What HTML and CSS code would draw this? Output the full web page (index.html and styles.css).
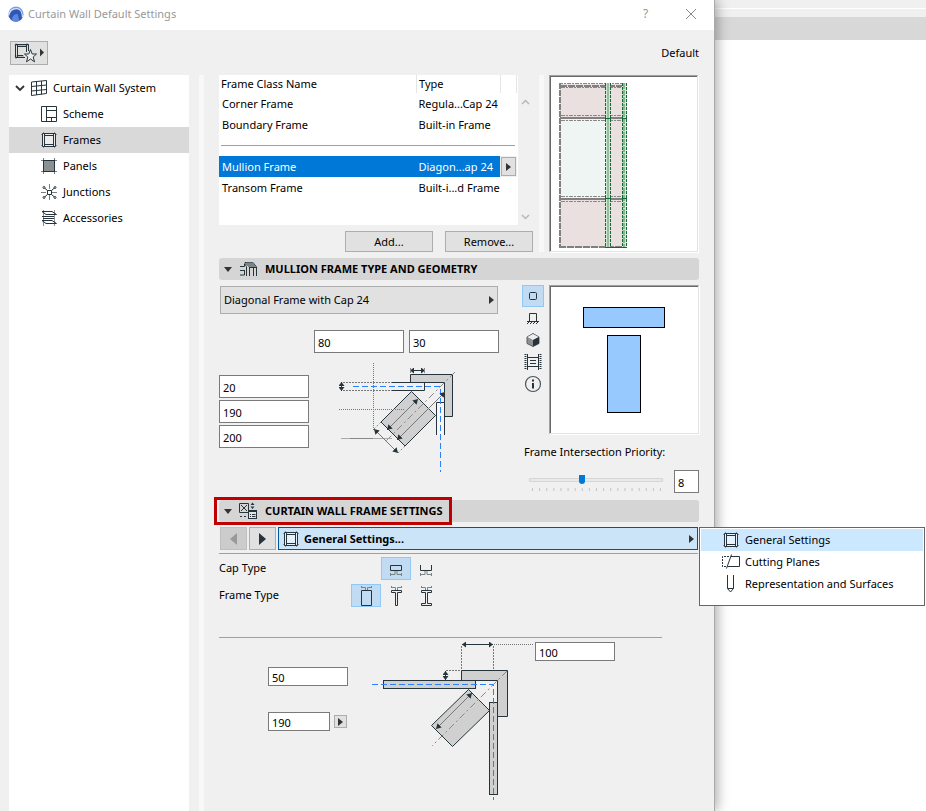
FILE: index.html
```html
<!DOCTYPE html>
<html lang="en">
<head>
<meta charset="utf-8">
<title>Curtain Wall Default Settings</title>
<link rel="stylesheet" href="styles.css">
</head>
<body>
<svg class="defs" aria-hidden="true">
  <defs>
    <symbol id="frame" viewBox="0 0 16 16">
      <path d="M2.500 0V2M13.500 0V2M2.500 14V16M13.500 14V16M0 2.500H2M0 13.500H2M14 2.500H16M14 13.500H16" stroke="#8a9093" fill="none"/>
      <path d="M1.500 1.500H14.500V14.500H1.500Z" stroke="#27343b" fill="#fff" fill-opacity=".5"/>
      <path d="M3.500 3.500H12.500V12.500H3.500ZM3.500 1.500V14.500M12.500 1.500V14.500" stroke="#27343b" fill="none"/>
    </symbol>
    <symbol id="tri" viewBox="0 0 5 8"><path d="M0 0L5 4L0 8Z" fill="#333"/></symbol>
    <marker id="arrow" viewBox="0 0 4 6" refX="4" refY="3" markerWidth="4" markerHeight="6" markerUnits="userSpaceOnUse" orient="auto-start-reverse"><path d="M0 0L4 3L0 6Z" fill="#27343b"/></marker>
    <marker id="arrow-big" viewBox="0 0 5 6" refX="5" refY="3" markerWidth="5" markerHeight="6" markerUnits="userSpaceOnUse" orient="auto-start-reverse"><path d="M0 0L5 3L0 6Z" fill="#27343b"/></marker>
  </defs>
</svg>
<div class="desktop">
  <main class="dialog">
    <header class="titlebar">
      <svg width="16" height="16" viewBox="0 0 16 16"><circle cx="8" cy="8" r="7.600" fill="#7d9fe4"/><path d="M.5 10C1.500 5 5 2 9 2.500C13 3 15 7 15 11A8 8 0 0 1 3 14Z" fill="#2f58b4"/><path d="M.6 9.500C2 4.500 5.500 2.300 9 2.600C12.500 3 14.500 7 14.500 11.500" fill="none" stroke="#dce6fa" stroke-width="1.200"/><path d="M3.500 14C4.500 10 6.500 7.500 9.500 8L11.500 15A8 8 0 0 1 3.500 14Z" fill="#5f86dc"/></svg>
      <h1>Curtain Wall Default Settings</h1>
      <button class="caption" aria-label="Help">?</button>
      <button class="caption" aria-label="Close"><svg width="12" height="12" viewBox="0 0 12 12"><path d="M1 1L11 11M11 1L1 11" stroke="#888" fill="none"/></svg></button>
    </header>
    <div class="toolbar">
      <button class="favorites" aria-label="Favorites">
        <svg width="34" height="20" viewBox="12 43 34 20">
          <path d="M14.500 45H29M14.500 56H24M16 43V45M27 43V45M16 57V59" stroke="#8a9093" fill="none"/>
          <path d="M15.500 44.500H28.500V51M15.500 44.500V57.500H25M17.500 44.500V57.500M26.500 44.500V52M17.500 46.500H26.500M17.500 55.500H23" stroke="#27343b" fill="none"/>
          <path d="M30.500 49.500L32.200 54H36.500L33.200 57L34.500 61.800L30.500 59L26.500 61.800L27.800 57L24.500 54H28.800Z" fill="#eee" stroke="#27343b"/>
          <path d="M40 48.500L44 52.500L40 56.500Z" fill="#333"/>
        </svg>
      </button>
      <span>Default</span>
    </div>
    <div class="body">
      <nav class="tree">
        <a class="root" href="#system"><svg width="10" height="8" viewBox="0 0 10 8"><path d="M1 2L5 6L9 2" stroke="#333" stroke-width="1.800" fill="none"/></svg><svg width="16" height="16" viewBox="0 0 16 16"><path d="M.5 2L15.500 .5V13.500L.5 15.500ZM5.500 1.500V15M10.500 1V14.500M.5 6.500L15.500 5M.5 11L15.500 9.500" stroke="#27343b" fill="none"/></svg>Curtain Wall System</a>
        <a href="#scheme"><svg width="16" height="16" viewBox="0 0 16 16"><path d="M.5 .5H15.500V15.500H.5ZM5.500 .5V15.500M5.500 4.500H15.500M5.500 11.500H15.500M10.500 11.500V15.500" stroke="#27343b" fill="none"/></svg>Scheme</a>
        <a class="current" href="#frames"><svg width="16" height="16"><use href="#frame"/></svg>Frames</a>
        <a href="#panels"><svg width="16" height="16" viewBox="0 0 16 16"><path d="M2.500 0V16M13.500 0V16M0 2.500H16M0 13.500H16" stroke="#788084" fill="none"/><rect x="2.500" y="2.500" width="11" height="11" fill="#8b9193" stroke="#27343b"/></svg>Panels</a>
        <a href="#junctions"><svg width="16" height="16" viewBox="0 0 16 16"><path d="M8.500 0V5M8.500 11V16M0 8.500H5M11 8.500H16" stroke="#788084" fill="none"/><path d="M3 3.500L6.500 6.500M14 3.500L10.500 6.500M3 13.500L6.500 10.500M14 13.500L10.500 10.500M6.500 6.500H10.500V10.500H6.500Z" stroke="#27343b" fill="none"/><g fill="#fff" stroke="#27343b"><circle cx="3" cy="3.500" r="1"/><circle cx="14" cy="3.500" r="1"/><circle cx="3" cy="13.500" r="1"/><circle cx="14" cy="13.500" r="1"/></g></svg>Junctions</a>
        <a href="#accessories"><svg width="16" height="16" viewBox="0 0 16 16"><path d="M2.500 0V16M13.500 0V16" stroke="#8a9093" fill="none"/><path d="M1 1.500H11L15.500 4.500H5ZM1 10.500H11L15.500 13.500H5ZM1 6.500H13M2 8.500H13" stroke="#27343b" fill="none"/></svg>Accessories</a>
      </nav>
      <div class="splitter"></div>
      <div class="content">
        <section class="classes">
          <div class="class-list">
            <div class="list-row">
              <div class="listbox">
                <table>
                  <thead><tr><th class="name">Frame Class Name</th><th class="type">Type</th><th class="pick"></th></tr></thead>
                  <tbody>
                    <tr><td>Corner Frame</td><td>Regula...Cap 24</td><td></td></tr>
                    <tr><td>Boundary Frame</td><td>Built-in Frame</td><td></td></tr>
                    <tr class="rule"><td colspan="3"><hr></td></tr>
                    <tr class="selected"><td>Mullion Frame</td><td>Diagon...ap 24</td><td><button class="pick-btn" aria-label="Choose type"><svg width="5" height="8"><use href="#tri"/></svg></button></td></tr>
                    <tr><td>Transom Frame</td><td>Built-i...d Frame</td><td></td></tr>
                  </tbody>
                </table>
              </div>
              <div class="scroll">
                <svg width="9" height="6" viewBox="0 0 9 6"><path d="M1 5L4.500 1.500L8 5" stroke="#b8b8b8" stroke-width="1.500" fill="none"/></svg>
                <svg width="9" height="6" viewBox="0 0 9 6"><path d="M1 1L4.500 4.500L8 1" stroke="#b8b8b8" stroke-width="1.500" fill="none"/></svg>
              </div>
            </div>
            <div class="actions"><button class="btn">Add...</button><button class="btn">Remove...</button></div>
          </div>
          <div class="splitter"></div>
          <div class="sunken wall">
            <svg width="68" height="166" viewBox="559 83 68 166">
              <rect x="560" y="84" width="66" height="164" fill="#ebe0e0"/>
              <rect x="561" y="118" width="45" height="80" fill="#eff5f2"/>
              <path d="M560 83V248" stroke="#808080" stroke-width="2" stroke-dasharray="6 1"/>
              <path d="M559 83.500H626M561 115.500H622M561 120.500H622M561 196.500H622M561 201.500H622M561 87.500H622" stroke="#888" stroke-dasharray="4 1 2 1"/>
              <path d="M560 86H622M559 247H626" stroke="#808080" stroke-width="2" stroke-dasharray="7 1"/>
              <path d="M560 118H624M560 199H624" stroke="#808080" stroke-width="2"/>
              <path d="M608 83V248" stroke="#c9ecd0" stroke-width="4"/><path d="M608 83V248" stroke="#9cbaa1" stroke-width="2"/>
              <path d="M624.500 83V248" stroke="#c9ecd0" stroke-width="4"/><path d="M624 83V248" stroke="#8bb493" stroke-width="2" stroke-dasharray="6 1"/>
              <path d="M605.500 83V248M610.500 83V248M622.500 83V248M626.500 83V248" stroke="#116c34" stroke-dasharray="3 1"/>
              <path d="M605 118.500H611M622 118.500H627M605 198.500H611M622 198.500H627M605 247.500H627" stroke="#116c34"/>
            </svg>
          </div>
        </section>

        <h2 class="bar">
          <svg width="8" height="5" viewBox="0 0 8 5"><path d="M0 0H8L4 5Z" fill="#333"/></svg>
          <svg width="18" height="18" viewBox="239 260 18 18"><path d="M240 266.500H244.500V264M240 270.500H244.500M240 275H244.500V270M246.500 276V266.500L244.500 263.500M249.500 276V267L245 262.500H253L256.500 267V276M249.500 267.500H256M253.500 268V276" stroke="#27343b" fill="none"/><path d="M246 262.500L249.500 267H256L253 262.500Z" fill="#7b8386"/></svg>
          Mullion Frame Type and Geometry
        </h2>
        <section class="geometry">
          <div class="dims">
            <button class="combo">Diagonal Frame with Cap 24<svg width="5" height="8"><use href="#tri"/></svg></button>
            <div class="dims-top"><input type="text" aria-label="Cap width" value="80"><input type="text" aria-label="Cap offset" value="30"></div>
            <div class="dims-side">
              <div class="stack"><input type="text" aria-label="Glazing depth" value="20"><input type="text" aria-label="Frame length" value="190"><input type="text" aria-label="Frame depth" value="200"></div>
              <svg width="120" height="112" viewBox="338 362 120 112" fill="none">
                <path d="M410.500 374.500H452.500V416.500H444.500V382.500H410.500Z" fill="#d0d0d0" stroke="#27343b"/>
                <path d="M392 382.500H424.500V390.500H392" stroke="#27343b"/>
                <path d="M343 382.500H392M343 390.500H392" stroke="#777" stroke-dasharray="2 1"/>
                <path d="M411.500 391.500L435.500 415.500L405 446L381 422Z" fill="#d0d0d0" stroke="#27343b"/>
                <path d="M436.500 435V402.500H444.500V435" fill="#f5f5f5" stroke="#27343b"/>
                <path d="M353 386.500H440.500V472" stroke="#2b80ff" stroke-dasharray="6 3"/>
                <path d="M455 372L385 442" stroke="#888" stroke-dasharray="7 3 2 3"/>
                <path d="M373.500 363V430M339 409.500H405" stroke="#777" stroke-dasharray="1 1"/>
                <path d="M341 438.500H392" stroke="#aaa"/><path d="M350 438.500H373" stroke="#888"/>
                <g stroke="#777">
                  <path d="M387 430L418 399" marker-start="url(#arrow-big)" marker-end="url(#arrow-big)"/>
                  <path d="M397 440L445 392" marker-start="url(#arrow-big)" marker-end="url(#arrow-big)"/>
                  <path d="M374 429L398 453" marker-start="url(#arrow-big)" marker-end="url(#arrow-big)"/>
                </g>
                <path d="M381 422L374 429M405 446L398 453" stroke="#888" stroke-dasharray="2 2"/>
                <path d="M410 370.500H425" stroke="#27343b" marker-start="url(#arrow)" marker-end="url(#arrow)"/>
                <path d="M341.500 382V391" stroke="#27343b" marker-start="url(#arrow)" marker-end="url(#arrow)"/>
                <path d="M410.500 368V373M424.500 368V373" stroke="#888"/>
              </svg>
            </div>
          </div>
          <div class="view">
            <div class="view-main">
              <div class="view-modes">
                <button class="on" aria-label="Section view"><svg width="18" height="18" viewBox="0 0 18 18"><rect x="5.500" y="5.500" width="7" height="7" rx="1" fill="none" stroke="#27343b"/></svg></button>
                <button aria-label="Elevation view"><svg width="18" height="18" viewBox="0 0 18 18"><path d="M5.500 12V4.500H12.500V12M3 12.500H15" fill="none" stroke="#27343b"/><path d="M3 15L5 13M6 15L8 13M9 15L11 13M12 15L14 13" stroke="#27343b"/></svg></button>
                <button aria-label="3D view"><svg width="18" height="18" viewBox="0 0 18 18"><path d="M9 2.500L15 6V12.500L9 15.500L3 12.500V6Z" fill="#8b9193" stroke="#566066"/><path d="M3.500 6L9 3L14.500 6L9 9Z" fill="#eee"/><path d="M9 9L15 6V12.500L9 15.500Z" fill="#27343b"/></svg></button>
                <button aria-label="Preview picture"><svg width="18" height="18" viewBox="0 0 18 18"><path d="M1.500 1V17M16.500 1V17" stroke="#27343b" stroke-width="2" stroke-dasharray="1 1"/><path d="M3.500 1V17M14.500 1V17M3.500 4.500H14.500M3.500 13.500H14.500M6 7.500H12M6 10.500H12" fill="none" stroke="#27343b"/></svg></button>
                <button aria-label="Info"><svg width="18" height="18" viewBox="0 0 18 18"><circle cx="9" cy="9" r="7.500" fill="none" stroke="#49545a" stroke-width="1.200"/><path d="M9 8V13.500M9 4.500V6.500" stroke="#27343b" stroke-width="2"/></svg></button>
              </div>
              <div class="sunken profile"><svg width="82" height="106" viewBox="0 0 82 106"><g fill="#97c9ff" stroke="#000"><rect x=".5" y=".5" width="81" height="20"/><rect x="24.500" y="28.500" width="33" height="77"/></g></svg></div>
            </div>
            <label for="priority">Frame Intersection Priority:</label>
            <div class="priority">
              <div class="slider"><input type="range" id="priority" min="1" max="19" value="8"><svg width="129" height="3" viewBox="0 0 129 3"><path d="M0 1.500H129" stroke="#c4c4c4" stroke-width="3" stroke-dasharray="1 6.110"/></svg></div>
              <input type="text" aria-label="Priority value" value="8">
            </div>
          </div>
        </section>

        <h2 class="bar marked">
          <svg width="8" height="5" viewBox="0 0 8 5"><path d="M0 0H8L4 5Z" fill="#333"/></svg>
          <svg width="18" height="18" viewBox="240 502 18 18" fill="none" stroke="#27343b"><path d="M240.500 503.500H249.500V512.500H240.500ZM242 505L248 511M248 505L242 511M241 516.500H243M245 516.500H247"/><path d="M251.500 505L253.500 502.500L255.500 505ZM251.500 506.500H255.500L253.500 509Z" fill="#27343b" stroke="none"/><rect x="249.500" y="510.500" width="8" height="8" fill="#e4e4e4"/><path d="M249 511.500H258M251 514.500H252M253 514.500H256.500M251 516.500H252M253 516.500H256.500"/></svg>
          Curtain Wall Frame Settings
        </h2>
        <section class="settings">
          <div class="pager">
            <button class="step" disabled aria-label="Previous page"><svg width="7" height="12" viewBox="0 0 7 12"><path d="M7 0L0 6L7 12Z" fill="#999"/></svg></button>
            <button class="step" aria-label="Next page"><svg width="7" height="12" viewBox="0 0 7 12"><path d="M0 0L7 6L0 12Z" fill="#27343b"/></svg></button>
            <div class="page-select">
              <button class="page"><svg width="16" height="16"><use href="#frame"/></svg><span>General Settings...</span><svg width="5" height="8"><use href="#tri"/></svg></button>
              <div class="menu">
                <button class="on"><svg width="18" height="16" viewBox="-1 0 18 16"><use href="#frame" width="16" height="16"/></svg>General Settings</button>
                <button><svg width="18" height="16" viewBox="0 0 18 16" fill="none" stroke="#27343b"><path d="M7 2.500H.5V12.500H5" stroke-dasharray="2 1"/><path d="M9 2.500H17.500V12.500H5.500M9.500 .5L4.500 14.500"/></svg>Cutting Planes</button>
                <button><svg width="18" height="18" viewBox="0 0 18 18" fill="none" stroke="#27343b"><path d="M5.500 0V13.500L8.500 17L11.500 13.500V0M5.500 13.500H11.500"/></svg>Representation and Surfaces</button>
              </div>
            </div>
          </div>
          <hr class="full">
          <div class="option">
            <span>Cap Type</span>
            <button class="on" aria-label="Box cap"><svg width="18" height="18" viewBox="0 0 18 18" fill="none"><path d="M4 14.500H8V11M14 14.500H10V11M3.500 13V16M14.500 13V16" stroke="#7b8386"/><path d="M3.500 5.500H14.500V10.500H3.500Z" stroke="#27343b"/></svg></button>
            <button aria-label="Open cap"><svg width="18" height="18" viewBox="0 0 18 18" fill="none"><path d="M4 14.500H8V11M14 14.500H10V11M3.500 13V16M14.500 13V16" stroke="#7b8386"/><path d="M3.500 5V10.500H14.500V5" stroke="#27343b"/></svg></button>
          </div>
          <div class="option">
            <span>Frame Type</span>
            <button class="on" aria-label="Box frame"><svg width="16" height="22" viewBox="0 0 16 22" fill="none"><path d="M3.500 1V3M13.500 1V3M3.500 2.500H7.500V6M13.500 2.500H9.500V6" stroke="#7b8386"/><path d="M3.500 5.500H13.500V20.500H3.500Z" stroke="#27343b"/></svg></button>
            <button aria-label="T frame"><svg width="16" height="22" viewBox="0 0 16 22" fill="none"><path d="M3.500 1V3M13.500 1V3M3.500 2.500H7.500V5M13.500 2.500H9.500V5" stroke="#7b8386"/><path d="M3.500 5.500H13.500V7.500H9.500V20.500H7.500V7.500H3.500Z" stroke="#27343b"/></svg></button>
            <button aria-label="I frame"><svg width="16" height="22" viewBox="0 0 16 22" fill="none"><path d="M3.500 1V3M13.500 1V3M3.500 2.500H7.500V5M13.500 2.500H9.500V5" stroke="#7b8386"/><path d="M3.500 5.500H13.500V7.500H9.500V18.500H13.500V20.500H3.500V18.500H7.500V7.500H3.500Z" stroke="#27343b"/></svg></button>
          </div>
          <hr class="partial">
          <div class="detail">
            <div class="detail-inputs">
              <input type="text" aria-label="Cap depth" value="50">
              <div><input type="text" aria-label="Frame length" value="190"><button class="more" aria-label="More"><svg width="5" height="8"><use href="#tri"/></svg></button></div>
            </div>
            <svg width="164" height="162" viewBox="370 640 164 162" fill="none">
              <path d="M461.500 670.500H507.500V716.500H497.500V680.500H461.500Z" fill="#d0d0d0" stroke="#27343b"/>
              <rect x="383.500" y="680.500" width="92" height="8" fill="#d0d0d0" stroke="#27343b"/>
              <path d="M468.500 689.500L489.500 710.500L452.500 746.500L431.500 725.500Z" fill="#d0d0d0" stroke="#27343b"/>
              <rect x="489.500" y="702.500" width="8" height="92" fill="#d0d0d0" stroke="#27343b"/>
              <path d="M372 684.500H493.500V800" stroke="#2b80ff" stroke-dasharray="6 3"/>
              <path d="M507 671L432 746" stroke="#888" stroke-dasharray="7 3 2 3"/>
              <path d="M461.500 646V670M493.500 646V670M446 670.500H461" stroke="#777" stroke-dasharray="2 1"/>
              <path d="M494 644.500H534" stroke="#777" stroke-dasharray="1 1"/>
              <path d="M462 644.500H493" stroke="#27343b" marker-start="url(#arrow)" marker-end="url(#arrow)"/>
              <path d="M445.500 671V680" stroke="#27343b" marker-start="url(#arrow)" marker-end="url(#arrow)"/>
              <path d="M436 729L472 693" stroke="#777" marker-start="url(#arrow-big)" marker-end="url(#arrow-big)"/>
            </svg>
            <input class="offset" type="text" aria-label="Cap width" value="100">
          </div>
        </section>
      </div>
    </div>
  </main>
  <aside class="backdrop"></aside>
</div>
</body>
</html>
```
FILE: styles.css
```css
*, *::before, *::after { box-sizing: border-box; }
body {
  margin: 0;
  background: #fff;
  color: #000;
  font: 11px/16px "Noto Sans", "Open Sans", sans-serif;
}
button, input { font: inherit; color: inherit; margin: 0; padding: 0; }
button { border: 0; background: none; }
svg { display: block; flex: none; }
hr { margin: 0; border: 0; height: 1px; background: #a0a0a0; }
.defs { position: absolute; width: 0; height: 0; }

.desktop { display: grid; grid-template-columns: minmax(0, 1fr) 211px; min-height: 100vh; }
.dialog {
  position: relative;
  z-index: 1;
  display: flex;
  flex-direction: column;
  background: #f0f0f0;
  border-right: 1px solid #aaa;
  box-shadow: 2px 0 12px rgba(0, 0, 0, .35);
}
.backdrop {
  background: linear-gradient(#f0f0f0 8px, #fff 8px 9px, #f0f0f0 9px 17px, #d8d8d8 17px 40px, #fff 40px);
}

.titlebar { display: flex; align-items: center; height: 30px; padding: 0 8px 2px; background: #fff; color: #999; }
.titlebar h1 { flex: 1; margin: 0 0 0 4px; font-size: 11px; line-height: 16px; font-weight: 400; }
.caption { display: grid; place-items: center; width: 45px; height: 28px; font-size: 12px; }
.caption:last-child { margin-right: -7px; }

.toolbar { display: flex; align-items: center; justify-content: space-between; height: 45px; padding: 0 15px 0 10px; }
.favorites { width: 38px; height: 24px; padding: 1px; border: 1px solid #adadad; background: #e1e1e1; }

.body { flex: 1; display: flex; align-items: stretch; }
.tree { width: 180px; margin-left: 9px; background: #fff; }
.tree a { display: flex; align-items: center; gap: 6px; height: 26px; padding-left: 32px; color: #000; text-decoration: none; }
.tree .root { padding-left: 6px; }
.tree .current { background: #d9d9d9; }
.splitter { width: 5px; margin-left: 10px; background: #f8f8f8; }
.content { flex: 1; min-width: 0; margin: 0 15px; }

.classes { display: flex; height: 177px; }
.class-list { flex: 1; }
.classes .splitter { margin: 0 5px 0 0; }
.list-row { display: flex; }
.listbox { flex: 1; height: 150px; background: #fff; padding-right: 1px; }
table { width: 100%; table-layout: fixed; border-collapse: collapse; }
th { height: 18px; padding: 0 2px; text-align: left; font-weight: 400; border-right: 1px solid #e5e5e5; }
th.name { width: auto; }
th.type { width: 84px; }
th.pick { width: 16px; }
td { height: 21px; padding: 0 3px; white-space: nowrap; }
td:nth-child(2) { padding: 0 2px; }
td:nth-child(3) { padding: 0; }
.selected { background: #0078d7; color: #fff; }
.rule td { padding: 0 2px; }
.pick-btn { display: grid; place-items: center; width: 15px; height: 19px; background: #e1e1e1; border: 1px solid #adadad; outline: 1px solid #f0f0f0; }
.scroll { display: flex; flex-direction: column; justify-content: space-between; align-items: center; width: 21px; padding: 24px 6px 5px 0; }
.actions { display: flex; justify-content: flex-end; gap: 12px; padding: 6px 6px 0 0; }
.btn { width: 88px; height: 21px; border: 1px solid #adadad; background: #e1e1e1; }
.sunken { border: 1px solid #e3e3e3; border-top-color: #a0a0a0; border-left-color: #a0a0a0; box-shadow: inset 1px 1px #696969, 1px 1px #fff; background: #fff; }
.wall { width: 149px; padding: 7px 9px; margin-right: 1px; }

.bar {
  position: relative;
  display: flex;
  align-items: center;
  height: 22px;
  margin: 6px 0 5px;
  padding-left: 5px;
  border-radius: 3px;
  background: #d5d5d5;
  font-size: 11px;
  line-height: 16px;
  font-weight: 700;
  text-transform: uppercase;
}
.bar svg:nth-child(2) { margin: 0 8px 0 7px; }
.marked::after { content: ""; position: absolute; left: -5px; top: -3px; width: 238px; height: 28px; border: 3px solid #c00000; }

input[type="text"] { border: 1px solid #7a7a7a; background: #fff; padding: 1px 3px 0; height: 23px; width: 90px; border-radius: 0; }
.geometry { display: flex; justify-content: space-between; height: 209px; }
.dims { width: 280px; }
.combo { display: flex; align-items: center; justify-content: space-between; width: 278px; height: 28px; margin: 1px; padding: 0 3px; border: 1px solid #adadad; background: #e1e1e1; }
.dims-top { display: flex; justify-content: flex-end; gap: 5px; margin-top: 16px; }
.dims-side { display: flex; gap: 29px; margin-top: 9px; }
.stack { display: flex; flex-direction: column; gap: 2px; padding-top: 13px; }
.view { width: 177px; }
.view-main { display: flex; gap: 5px; height: 149px; }
.view-modes { display: flex; flex-direction: column; }
.view-modes button { display: grid; place-items: center; width: 22px; height: 22px; border: 1px solid transparent; }
.view-modes .on, .option .on { background: #c1dcf2; border: 1px solid #90c8f6; }
.profile { flex: 1; margin-right: 1px; padding: 21px 33px; }
.view label { display: block; margin: 10px 0 0 2px; }
.priority { display: flex; justify-content: space-between; margin: 10px 0 0 7px; }
.priority input[type="text"] { width: 25px; }
.slider { width: 134px; padding-top: 5px; }
.slider svg { margin: 3px 0 0 3px; }
input[type="range"] { display: block; width: 134px; height: 10px; appearance: none; background: none; }
input[type="range"]::-webkit-slider-runnable-track { height: 4px; border: 1px solid #d6d6d6; background: #e7eaea; }
input[type="range"]::-webkit-slider-thumb { appearance: none; width: 6px; height: 9px; margin-top: -4px; background: #0078d7; border-radius: 0 0 3px 3px; }

.pager { display: flex; gap: 2px; padding: 0 1px; }
.step { display: grid; place-items: center; width: 27px; height: 23px; border: 1px solid #adadad; background: #e1e1e1; }
.step:disabled { background: #ccc; border-color: #bfbfbf; }
.page-select { position: relative; flex: 1; }
.page { display: flex; align-items: center; gap: 5px; width: 100%; height: 23px; padding: 0 3px 0 4px; border: 1px solid #00559b; background: #cce4f7; font-weight: 700; }
.page span { flex: 1; text-align: left; }
.menu { position: absolute; left: 100%; top: 0; margin-left: 1px; width: 226px; height: 79px; padding: 1px 1px 10px; border: 1px solid #666; background: #fff; }
.menu button { display: flex; align-items: center; gap: 5px; width: 100%; height: 22px; padding-left: 21px; }
.menu .on { background: #cce8ff; }
.full { margin: 3px 1px 3px 0; }
.option { display: flex; height: 27px; justify-content: flex-end; padding-right: 258px; }
.option span { margin-right: auto; padding-top: 3px; }
.option button { display: grid; place-items: center; width: 30px; height: 23px; border: 1px solid transparent; }
.partial { margin: 26px 37px 2px 0; }
.detail { display: flex; padding-left: 49px; }
.detail-inputs { width: 102px; padding-top: 27px; }
.detail-inputs div { display: flex; gap: 4px; align-items: center; margin-top: 26px; }
.detail input[type="text"] { width: 80px; height: 19px; }
.detail .detail-inputs div input[type="text"] { width: 62px; }
.more { display: grid; place-items: center; width: 13px; height: 13px; border: 1px solid #adadad; background: #e1e1e1; }
.detail input.offset { margin: 2px 0 0 1px; }
```
